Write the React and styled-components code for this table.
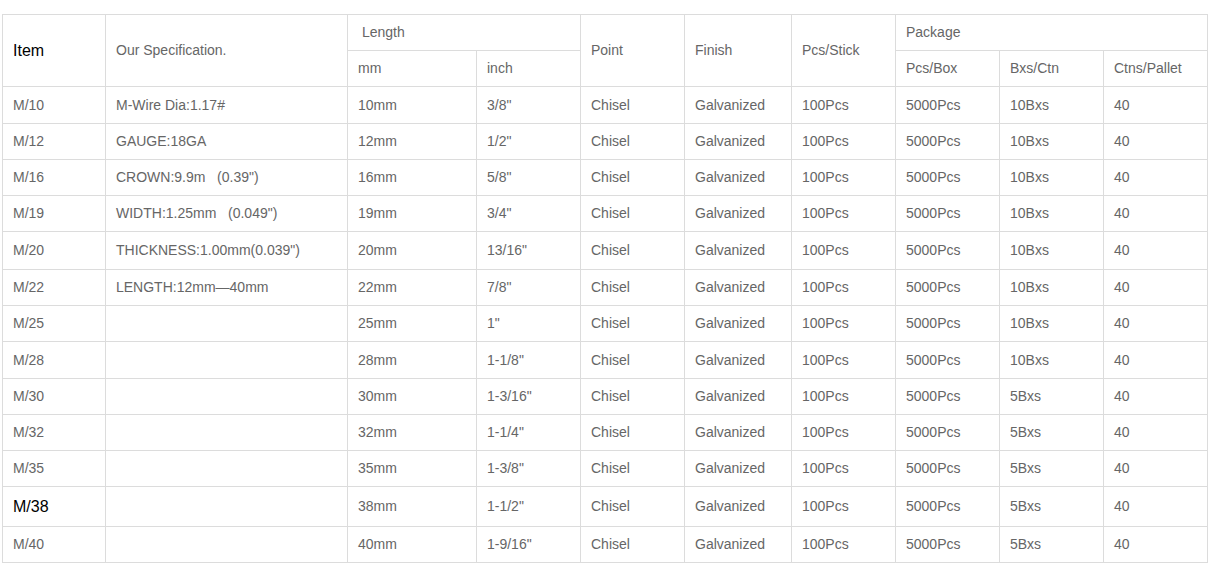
import styled, { createGlobalStyle } from 'styled-components';

const GlobalStyle = createGlobalStyle`
    body {
        margin: 0;
        background: #fff;
        font-family: "Liberation Sans", Arial, sans-serif;
    }
`;

const widths = [103, 242, 129, 104, 104, 107, 104, 104, 104, 104];

const rows = [
    ['M/10', 'M-Wire Dia:1.17#', '10mm', '3/8"', '10Bxs', 37],
    ['M/12', 'GAUGE:18GA', '12mm', '1/2"', '10Bxs', 36],
    ['M/16', 'CROWN:9.9m\u00a0\u00a0\u00a0(0.39")', '16mm', '5/8"', '10Bxs', 36],
    ['M/19', 'WIDTH:1.25mm\u00a0\u00a0\u00a0(0.049")', '19mm', '3/4"', '10Bxs', 36],
    ['M/20', 'THICKNESS:1.00mm(0.039")', '20mm', '13/16"', '10Bxs', 38],
    ['M/22', 'LENGTH:12mm\u201440mm', '22mm', '7/8"', '10Bxs', 36],
    ['M/25', '', '25mm', '1"', '10Bxs', 36],
    ['M/28', '', '28mm', '1-1/8"', '10Bxs', 37],
    ['M/30', '', '30mm', '1-3/16"', '5Bxs', 36],
    ['M/32', '', '32mm', '1-1/4"', '5Bxs', 36],
    ['M/35', '', '35mm', '1-3/8"', '5Bxs', 36],
    ['M/38', '', '38mm', '1-1/2"', '5Bxs', 40],
    ['M/40', '', '40mm', '1-9/16"', '5Bxs', 36],
];

const App = () => {
    return (
        <Page>
            <GlobalStyle />
            <SpecTable>
                <colgroup>
                    {widths.map((w, i) => <col key={i} style={{ width: w }} />)}
                </colgroup>
                <thead>
                    <Row $h={36}>
                        <Cell rowSpan={2} $big>Item</Cell>
                        <Cell rowSpan={2}>Our Specification.</Cell>
                        <Cell colSpan={2}>{'\u00a0'}Length</Cell>
                        <Cell rowSpan={2}>Point</Cell>
                        <Cell rowSpan={2}>Finish</Cell>
                        <Cell rowSpan={2}>Pcs/Stick</Cell>
                        <Cell colSpan={3}>Package</Cell>
                    </Row>
                    <Row $h={36}>
                        <Cell>mm</Cell>
                        <Cell>inch</Cell>
                        <Cell>Pcs/Box</Cell>
                        <Cell>Bxs/Ctn</Cell>
                        <Cell>Ctns/Pallet</Cell>
                    </Row>
                </thead>
                <tbody>
                    {rows.map(([item, spec, mm, inch, bxs, h]) => (
                        <Row key={item} $h={h}>
                            <Cell $big={item === 'M/38'}>{item}</Cell>
                            <Cell>{spec}</Cell>
                            <Cell>{mm}</Cell>
                            <Cell>{inch}</Cell>
                            <Cell>Chisel</Cell>
                            <Cell>Galvanized</Cell>
                            <Cell>100Pcs</Cell>
                            <Cell>5000Pcs</Cell>
                            <Cell>{bxs}</Cell>
                            <Cell>40</Cell>
                        </Row>
                    ))}
                </tbody>
            </SpecTable>
        </Page>
    );
};

const Page = styled.div`
    padding: 14px 0 0 2px;
`;

const SpecTable = styled.table`
    border-collapse: collapse;
    table-layout: fixed;
    width: 1206px;
    border: 1px solid #dcdcdc;
`;

const Row = styled.tr`
    height: ${props => props.$h}px;
`;

const Cell = styled.td`
    border: 1px solid #dcdcdc;
    padding: 0 10px;
    vertical-align: middle;
    text-align: left;
    white-space: nowrap;
    font-size: ${props => (props.$big ? 16 : 14)}px;
    color: ${props => (props.$big ? '#000' : '#666')};
    line-height: 1.2;
`;

export default App;
